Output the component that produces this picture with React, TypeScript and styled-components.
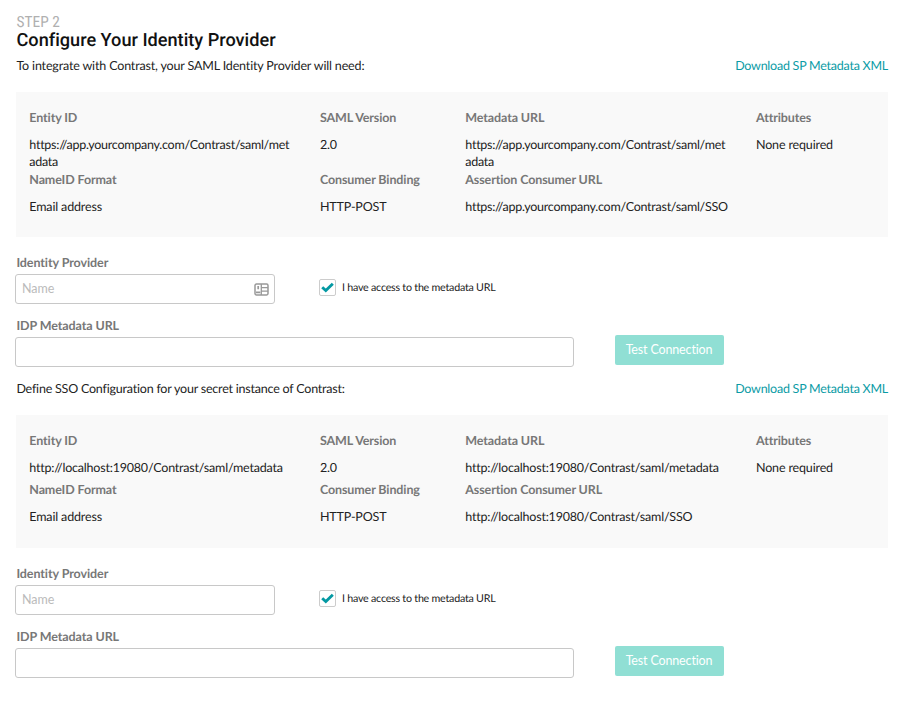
import React from "react";
import styled, { createGlobalStyle } from "styled-components";

const GlobalStyle = createGlobalStyle`
  * { box-sizing: border-box; }
  body {
    margin: 0;
    background: #fff;
    color: #222;
    font-family: Lato, sans-serif;
    font-size: 12.5px;
    line-height: 17px;
    letter-spacing: -0.15px;
    font-variant-ligatures: none;
    text-rendering: geometricPrecision;
  }
`;

const Page = styled.main`
  width: 900px;
  height: 701px;
  overflow: hidden;
  padding: 13px 12px 0 16px;
`;

const Step = styled.div`
  height: 17px;
  padding-left: 0.5px;
  line-height: 18px;
  font-family: "Roboto Condensed", Roboto, sans-serif;
  font-size: 15.4px;
  font-weight: 400;
  letter-spacing: 0;
  color: #b0b0b0;
`;

const Title = styled.h1`
  margin: 0;
  height: 19px;
  padding-left: 0.5px;
  line-height: 21px;
  font-family: Roboto, sans-serif;
  font-size: 18.15px;
  font-weight: 500;
  letter-spacing: 0;
  color: #111;
`;

const Intro = styled.div<{ $tracking: number }>`
  display: flex;
  justify-content: space-between;
  align-items: center;
  height: 33px;
  margin-bottom: 10px;
  padding-left: 0.4px;
  letter-spacing: ${(p) => p.$tracking}px;
`;

const Download = styled.a`
  color: #0a9ba5;
  letter-spacing: -0.24px;
`;

const Panel = styled.dl<{ $height: number }>`
  margin: 0;
  display: grid;
  grid-template-columns: 4fr 2fr 4fr 2fr;
  align-content: start;
  height: ${(p) => p.$height}px;
  padding-top: 17px;
  background: #f9f9f9;
`;

const Field = styled.div`
  min-width: 0;
  padding: 0 13px 0 13.3px;
`;

const Term = styled.dt`
  height: 27px;
  line-height: 18px;
  font-weight: 700;
  letter-spacing: -0.12px;
  color: #777;
`;

const Detail = styled.dd<{ $tracking: number }>`
  margin: 0;
  min-height: 22px;
  line-height: 17.3px;
  letter-spacing: ${(p) => p.$tracking}px;
  word-break: break-all;
`;

const Form = styled.form`
  padding-top: 17px;
`;

const FormRow = styled.div<{ $height: number }>`
  display: flex;
  height: ${(p) => p.$height}px;
`;

const Group = styled.div<{ $width: number }>`
  width: ${(p) => p.$width}px;
  margin-left: -1px;
`;

const Label = styled.label`
  display: block;
  height: 20px;
  line-height: 17px;
  padding-left: 1.4px;
  font-weight: 700;
  letter-spacing: -0.09px;
  color: #777;
`;

const InputBox = styled.div`
  display: flex;
  align-items: center;
  height: 30px;
  padding: 0 5px 0 6px;
  border: 1px solid #c8c8c8;
  border-radius: 3px;
`;

const Input = styled.input`
  flex: 1;
  min-width: 0;
  padding: 0 0 1px;
  border: 0;
  outline: 0;
  background: none;
  font: inherit;
  &::placeholder { color: #bbb; opacity: 1; }
`;

const Access = styled.div`
  display: flex;
  align-items: center;
  height: 17px;
  margin: 25px 0 0 44px;
  gap: 6px;
  font-size: 10.7px;
  letter-spacing: -0.23px;
`;

const Check = styled.span`
  display: flex;
  align-items: center;
  justify-content: center;
  width: 17px;
  height: 17px;
  border: 1px solid #ccc;
  border-radius: 2px;
`;

const TestButton = styled.button`
  width: 109px;
  height: 30px;
  margin: 18px 0 0 40.5px;
  padding: 0 0 1px;
  border: 0;
  border-radius: 2px;
  background: #90dfd4;
  color: #fff;
  font: inherit;
  letter-spacing: -0.15px;
`;

const CardIcon = () => (
  <svg width="15" height="13" viewBox="0 0 15 13" fill="none" stroke="#999">
    <rect x="1" y="1" width="13" height="11" rx="1.4" strokeWidth="1.5" />
    <path d="M7.3 1v11M7.3 4.6H14M7.3 8.2H14" strokeWidth="1.3" />
    <path d="M4.2 3v3.2M2 9.3h4.4" strokeWidth="1.7" />
  </svg>
);

const CheckIcon = () => (
  <svg width="13" height="11" viewBox="0 0 13 11" fill="none" stroke="#0499a3" strokeWidth="2.9">
    <path d="M1.2 5.2 4.8 8.5 11.8 1.8" />
  </svg>
);

interface SectionProps {
  id: string;
  intro: string;
  introTracking: number;
  urlTracking: number;
  metadata: string;
  consumer: string;
  height: number;
  card?: boolean;
}

const Section = ({
  id, intro, introTracking, urlTracking, metadata, consumer, height, card,
}: SectionProps) => {
  const fields = [
    ["Entity ID", metadata],
    ["SAML Version", "2.0"],
    ["Metadata URL", metadata],
    ["Attributes", "None required"],
    ["NameID Format", "Email address"],
    ["Consumer Binding", "HTTP-POST"],
    ["Assertion Consumer URL", consumer],
  ];
  return (
    <section>
      <Intro $tracking={introTracking}>
        <span>{intro}</span>
        <Download>Download SP Metadata XML</Download>
      </Intro>
      <Panel $height={height}>
        {fields.map(([term, value]) => (
          <Field key={term}>
            <Term>{term}</Term>
            <Detail $tracking={value.startsWith("http") ? urlTracking : -0.15}>{value}</Detail>
          </Field>
        ))}
      </Panel>
      <Form>
        <FormRow $height={63}>
          <Group $width={260}>
            <Label htmlFor={id + "-name"}>Identity Provider</Label>
            <InputBox>
              <Input id={id + "-name"} placeholder="Name" />
              {card && <CardIcon />}
            </InputBox>
          </Group>
          <Access>
            <Check><CheckIcon /></Check>
            <span>I have access to the metadata URL</span>
          </Access>
        </FormRow>
        <FormRow $height={55}>
          <Group $width={559}>
            <Label htmlFor={id + "-url"}>IDP Metadata URL</Label>
            <InputBox><Input id={id + "-url"} /></InputBox>
          </Group>
          <TestButton type="button">Test Connection</TestButton>
        </FormRow>
      </Form>
    </section>
  );
};

export default function App() {
  return (
    <>
      <GlobalStyle />
      <Page>
        <Step>STEP 2</Step>
        <Title>Configure Your Identity Provider</Title>
        <Section
          id="app"
          intro="To integrate with Contrast, your SAML Identity Provider will need:"
          introTracking={-0.16}
          urlTracking={-0.26}
          metadata="https://app.yourcompany.com/Contrast/saml/metadata"
          consumer="https://app.yourcompany.com/Contrast/saml/SSO"
          height={145}
          card
        />
        <Section
          id="secret"
          intro="Define SSO Configuration for your secret instance of Contrast:"
          introTracking={-0.21}
          urlTracking={-0.2}
          metadata="http://localhost:19080/Contrast/saml/metadata"
          consumer="http://localhost:19080/Contrast/saml/SSO"
          height={133}
        />
      </Page>
    </>
  );
}
